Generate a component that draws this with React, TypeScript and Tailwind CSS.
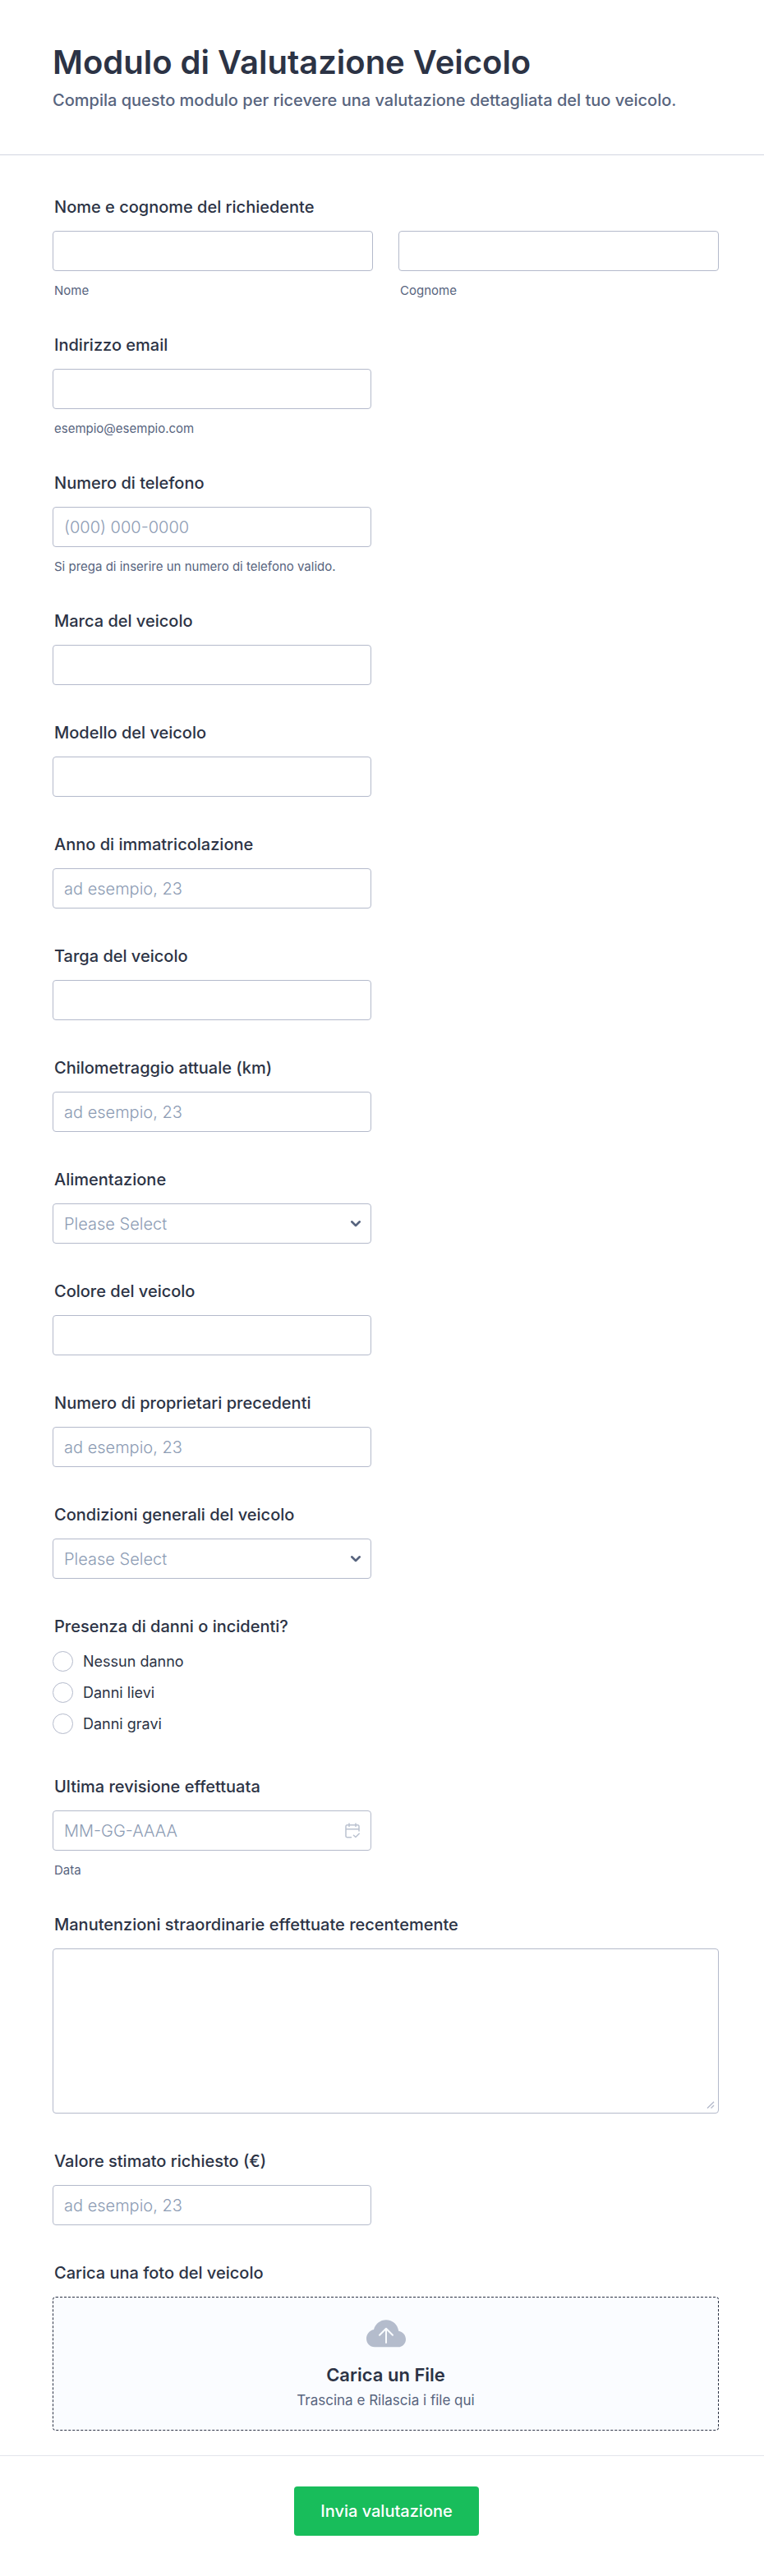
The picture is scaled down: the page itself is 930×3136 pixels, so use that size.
import { ReactNode, useState } from "react";

const inputClass =
  "block h-[49px] w-full rounded-[4px] border border-[#b4bacb] bg-white px-[13px] text-[20px] font-light text-[#2c3345] outline-none placeholder:text-[#8d9cb4] focus:border-[#2e69ff]";

const labelClass =
  "mb-[17px] ml-[2px] block text-[20px] leading-6 font-medium text-[#2c3345]";

const subLabelClass =
  "mt-4 ml-[2px] block text-[15px] leading-4 text-[#57647e]";

type FieldProps = {
  id: string;
  label: string;
  hint?: string;
  wide?: boolean;
  children: ReactNode;
};

function Field({ id, label, hint, wide, children }: FieldProps) {
  return (
    <div className={wide ? "w-full" : "w-full max-w-[388px]"}>
      <label htmlFor={id} className={labelClass}>
        {label}
      </label>
      {children}
      {hint && <span className={subLabelClass}>{hint}</span>}
    </div>
  );
}

type TextFieldProps = {
  id: string;
  label: string;
  hint?: string;
  type?: string;
  placeholder?: string;
};

function TextField({ id, label, hint, type, placeholder }: TextFieldProps) {
  return (
    <Field id={id} label={label} hint={hint}>
      <input
        id={id}
        name={id}
        type={type || "text"}
        placeholder={placeholder}
        className={inputClass}
      />
    </Field>
  );
}

type SelectFieldProps = {
  id: string;
  label: string;
  options: string[];
};

function SelectField({ id, label, options }: SelectFieldProps) {
  const [value, setValue] = useState("");

  return (
    <Field id={id} label={label}>
      <div className="relative">
        <select
          id={id}
          name={id}
          value={value}
          onChange={(e) => setValue(e.target.value)}
          className={`${inputClass} appearance-none ${
            value ? "" : "text-[#8d9cb4]!"
          }`}
        >
          <option value="">Please Select</option>
          {options.map((option) => (
            <option key={option} value={option}>
              {option}
            </option>
          ))}
        </select>
        <svg
          viewBox="0 0 14 10"
          fill="none"
          stroke="#57647e"
          strokeWidth={2.6}
          strokeLinecap="round"
          strokeLinejoin="round"
          className="pointer-events-none absolute top-5 right-3 h-[10px] w-[14px]"
        >
          <path d="M2.2 2.3 7 7l4.8-4.7" />
        </svg>
      </div>
    </Field>
  );
}

const damages = ["Nessun danno", "Danni lievi", "Danni gravi"];

export default function App() {
  const [damage, setDamage] = useState("");

  return (
    <form
      onSubmit={(e) => e.preventDefault()}
      className="w-full bg-white font-['Inter',sans-serif] text-[#2c3345]"
    >
      <header className="border-b border-[#d2d6e0] pt-[52px] pr-[55px] pb-[54px] pl-16">
        <h1 className="text-[40px] leading-[48px] font-semibold">
          Modulo di Valutazione Veicolo
        </h1>
        <p className="mt-[10px] text-[20px] leading-6 font-medium text-[#57647e]">
          Compila questo modulo per ricevere una valutazione dettagliata del tuo
          veicolo.
        </p>
      </header>

      <div className="flex flex-col gap-[46px] pt-[51px] pr-[55px] pb-[30px] pl-16">
        <fieldset>
          <legend className={labelClass}>Nome e cognome del richiedente</legend>
          <div className="grid grid-cols-2 gap-[31px]">
            <div className="flex flex-col">
              <input id="nome" name="nome" type="text" className={inputClass} />
              <label htmlFor="nome" className={subLabelClass}>
                Nome
              </label>
            </div>
            <div className="flex flex-col">
              <input
                id="cognome"
                name="cognome"
                type="text"
                className={inputClass}
              />
              <label htmlFor="cognome" className={subLabelClass}>
                Cognome
              </label>
            </div>
          </div>
        </fieldset>

        <TextField
          id="email"
          label="Indirizzo email"
          type="email"
          hint="esempio@esempio.com"
        />
        <TextField
          id="telefono"
          label="Numero di telefono"
          type="tel"
          placeholder="(000) 000-0000"
          hint="Si prega di inserire un numero di telefono valido."
        />

        {/* Vehicle details */}
        <TextField id="marca" label="Marca del veicolo" />
        <TextField id="modello" label="Modello del veicolo" />
        <TextField
          id="anno"
          label="Anno di immatricolazione"
          placeholder="ad esempio, 23"
        />
        <TextField id="targa" label="Targa del veicolo" />
        <TextField
          id="chilometraggio"
          label="Chilometraggio attuale (km)"
          placeholder="ad esempio, 23"
        />
        <SelectField
          id="alimentazione"
          label="Alimentazione"
          options={["Benzina", "Diesel", "GPL", "Ibrida", "Elettrica"]}
        />
        <TextField id="colore" label="Colore del veicolo" />
        <TextField
          id="proprietari"
          label="Numero di proprietari precedenti"
          placeholder="ad esempio, 23"
        />
        <SelectField
          id="condizioni"
          label="Condizioni generali del veicolo"
          options={["Ottime", "Buone", "Discrete", "Scarse"]}
        />

        <fieldset className="pb-[6px]">
          <legend className={labelClass}>Presenza di danni o incidenti?</legend>
          <div className="flex flex-col gap-[13px] pt-px">
            {damages.map((option) => (
              <label
                key={option}
                className="flex items-center gap-3 text-[18px] leading-[25px]"
              >
                <input
                  type="radio"
                  name="danni"
                  value={option}
                  checked={damage === option}
                  onChange={() => setDamage(option)}
                  className="size-[25px] shrink-0 appearance-none rounded-full border border-[#b4bacb] bg-white checked:border-[7px] checked:border-[#2e69ff]"
                />
                {option}
              </label>
            ))}
          </div>
        </fieldset>

        <Field id="revisione" label="Ultima revisione effettuata" hint="Data">
          <div className="relative">
            <input
              id="revisione"
              name="revisione"
              type="text"
              placeholder="MM-GG-AAAA"
              className={inputClass}
            />
            <button
              type="button"
              aria-label="Scegli una data"
              className="absolute top-[15px] right-[14px]"
            >
              <svg
                viewBox="0 0 18 19"
                fill="none"
                stroke="#bac2d0"
                strokeWidth={1.5}
                strokeLinecap="round"
                strokeLinejoin="round"
                className="h-[19px] w-[18px]"
              >
                <path d="M7.5 17.8H2.6A1.6 1.6 0 0 1 1 16.2V4.4a1.6 1.6 0 0 1 1.6-1.6h12.8A1.6 1.6 0 0 1 17 4.4V10M1 7.8h16M5 1v3.6M13 1v3.6M10.5 15.2l2.4 2.3 4.3-4.3" />
              </svg>
            </button>
          </div>
        </Field>

        <Field
          id="manutenzioni"
          label="Manutenzioni straordinarie effettuate recentemente"
          wide
        >
          <div className="relative">
            <textarea
              id="manutenzioni"
              name="manutenzioni"
              className="block h-[201px] w-full resize-none rounded-[4px] border border-[#b4bacb] bg-white p-3 text-[20px] font-light outline-none focus:border-[#2e69ff]"
            />
            <svg
              viewBox="0 0 10 9"
              fill="none"
              stroke="#b4bacb"
              strokeWidth={1.4}
              className="pointer-events-none absolute right-[5px] bottom-[6px] h-[9px] w-[10px]"
            >
              <path d="M1 8.5 9 .8M5.5 8.5 9 5" />
            </svg>
          </div>
        </Field>

        <TextField
          id="valore"
          label="Valore stimato richiesto (€)"
          placeholder="ad esempio, 23"
        />

        <Field id="foto" label="Carica una foto del veicolo" wide>
          <label
            htmlFor="foto"
            className="relative flex h-[163px] cursor-pointer flex-col items-center rounded-[4px] border border-dashed border-[#2c3345] bg-[#fafcff] pt-[27px]"
          >
            <input
              id="foto"
              name="foto"
              type="file"
              accept="image/*"
              multiple
              className="sr-only"
            />
            <svg viewBox="0 0 48 34" className="h-[34px] w-12">
              <path
                fill="#b4bccc"
                d="M10 33.3C4.2 33.3 0 28.8 0 23c0-5.3 3.7-9.9 9-11C10.8 5.2 16.8.3 24 .3c7.8 0 14.2 5.8 15.2 13.4C44.2 14.6 48 18.6 48 23.7c0 5.3-4 9.6-9.3 9.6H10Z"
              />
              <path
                fill="none"
                stroke="#fafcff"
                strokeWidth={2}
                strokeLinecap="round"
                strokeLinejoin="round"
                d="M24 28V11M16 18.7l8-8 8 8"
              />
            </svg>
            <span className="mt-5 text-[22px] leading-[26px] font-semibold">
              Carica un File
            </span>
            <span className="mt-[6px] text-[17px] leading-6 text-[#57647e]">
              Trascina e Rilascia i file qui
            </span>
          </label>
        </Field>
      </div>

      <footer className="flex justify-center border-t border-[#e3e5ec] pt-[37px] pb-[49px] pl-[11px]">
        <button
          type="submit"
          className="h-[60px] rounded-[4px] bg-[#18bd5b] px-8 text-[20px] font-medium text-white"
        >
          Invia valutazione
        </button>
      </footer>
    </form>
  );
}
